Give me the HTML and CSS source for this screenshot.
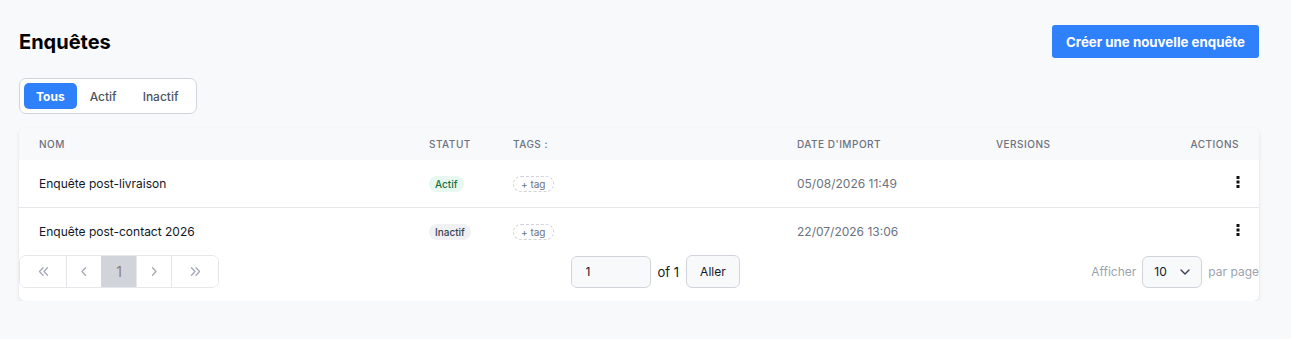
FILE: index.html
```html
<!DOCTYPE html>
<html lang="fr">
<head>
  <meta charset="UTF-8">
  <meta name="viewport" content="width=device-width, initial-scale=1.0">
  <title>Enquêtes</title>
  <link rel="stylesheet" href="styles.css">
</head>
<body>

<div class="page">
  <!-- en-tête -->
  <div class="page-head">
    <h1>Enquêtes</h1>
    <button type="button" class="btn-primary">Créer une nouvelle enquête</button>
  </div>

  <!-- filtres -->
  <div class="tabs">
    <button type="button" class="tab active">Tous</button>
    <button type="button" class="tab">Actif</button>
    <button type="button" class="tab">Inactif</button>
  </div>

  <!-- tableau -->
  <div class="card">
    <table class="survey-table">
      <colgroup>
        <col style="width:390px">
        <col style="width:84px">
        <col style="width:284px">
        <col style="width:199px">
        <col>
        <col style="width:120px">
      </colgroup>
      <thead>
        <tr>
          <th>Nom</th>
          <th>Statut</th>
          <th>Tags :</th>
          <th>Date d'import</th>
          <th>Versions</th>
          <th class="right">Actions</th>
        </tr>
      </thead>
      <tbody>
        <tr>
          <td class="name">Enquête post-livraison</td>
          <td><span class="badge on">Actif</span></td>
          <td><span class="tag-add">+ tag</span></td>
          <td class="date">05/08/2026 11:49</td>
          <td></td>
          <td class="right"><button type="button" class="kebab"><svg width="4" height="12" viewBox="0 0 4 12"><rect x="0.5" y="0" width="3" height="3"/><rect x="0.5" y="4.5" width="3" height="3"/><rect x="0.5" y="9" width="3" height="3"/></svg></button></td>
        </tr>
        <tr>
          <td class="name">Enquête post-contact 2026</td>
          <td><span class="badge off">Inactif</span></td>
          <td><span class="tag-add">+ tag</span></td>
          <td class="date">22/07/2026 13:06</td>
          <td></td>
          <td class="right"><button type="button" class="kebab"><svg width="4" height="12" viewBox="0 0 4 12"><rect x="0.5" y="0" width="3" height="3"/><rect x="0.5" y="4.5" width="3" height="3"/><rect x="0.5" y="9" width="3" height="3"/></svg></button></td>
        </tr>
      </tbody>
    </table>

    <!-- pagination -->
    <div class="pager">
      <div class="pages">
        <button type="button" class="pg first"><svg width="11" height="9" viewBox="0 0 11 9"><path d="M5 0.8L1.5 4.5 5 8.2M9.5 0.8L6 4.5 9.5 8.2"/></svg></button>
        <button type="button" class="pg"><svg width="6" height="9" viewBox="0 0 6 9"><path d="M4.5 0.8L1 4.5 4.5 8.2"/></svg></button>
        <button type="button" class="pg current">1</button>
        <button type="button" class="pg"><svg width="6" height="9" viewBox="0 0 6 9"><path d="M1.5 0.8L5 4.5 1.5 8.2"/></svg></button>
        <button type="button" class="pg last"><svg width="11" height="9" viewBox="0 0 11 9"><path d="M1.5 0.8L5 4.5 1.5 8.2M6 0.8L9.5 4.5 6 8.2"/></svg></button>
      </div>
      <div class="goto">
        <input type="text" class="goto-input" value="1">
        <span>of 1</span>
        <button type="button" class="goto-btn">Aller</button>
      </div>
      <div class="per-page">
        <span>Afficher</span>
        <div class="select">10 <svg width="10" height="6" viewBox="0 0 10 6"><path d="M1 1l4 4 4-4" fill="none" stroke="#374151" stroke-width="1.4" stroke-linecap="round" stroke-linejoin="round"/></svg></div>
        <span>par page</span>
      </div>
    </div>
  </div>
</div>

</body>
</html>
```

FILE: styles.css
```css
/* base */
body {
  margin: 0;
  background-color: #f8f9fb;
  font-family: Inter, 'Noto Sans', sans-serif;
  color: #111827;
}

button {
  font-family: inherit;
  cursor: pointer;
}

.page {
  padding: 25px 32px 0 19px;
}

/* en-tête */
.page-head {
  display: flex;
  justify-content: space-between;
  align-items: center;
  height: 33px;
}

h1 {
  margin: 0;
  font-size: 20px;
  font-weight: 700;
  color: #000;
}

.btn-primary {
  height: 33px;
  padding: 0 14px;
  border: none;
  border-radius: 3px;
  background-color: #2f80fb;
  color: #fff;
  font-size: 13.3px;
  font-weight: 700;
}

/* onglets */
.tabs {
  display: inline-flex;
  margin-top: 20px;
  padding: 4px;
  background-color: #fff;
  border: 1px solid #d1d5db;
  border-radius: 7px;
}

.tab {
  height: 26px;
  padding: 0 13px;
  border: none;
  border-radius: 5px;
  background: none;
  color: #4b5563;
  font-size: 12px;
  font-weight: 500;
}

.tab.active {
  background-color: #2f80fb;
  color: #fff;
  font-weight: 700;
  padding: 0 12px;
}

/* carte tableau */
.card {
  margin-top: 14px;
  background-color: #fff;
  border-radius: 6px;
  box-shadow: 0 2px 4px rgba(0, 0, 0, 0.09), 0 0 1px rgba(0, 0, 0, 0.06);
  padding-bottom: 13px;
  overflow: hidden;
}

.survey-table {
  width: 100%;
  border-collapse: collapse;
  table-layout: fixed;
}

.survey-table th {
  height: 32px;
  padding: 0 20px;
  background-color: #f8f9fb;
  color: #6b7280;
  font-size: 10px;
  font-weight: 500;
  letter-spacing: 0.05em;
  text-transform: uppercase;
  text-align: left;
}

.survey-table td {
  height: 47px;
  padding: 0 20px;
  font-size: 12px;
}

.survey-table tbody tr:first-child td {
  border-bottom: 1px solid #e5e7eb;
}

.survey-table .right {
  text-align: right;
}

.name {
  color: #111827;
}

.date {
  color: #6b7280;
  font-size: 11.8px;
}

.badge {
  display: inline-block;
  padding: 2px 6px;
  border-radius: 9px;
  font-size: 10px;
  font-weight: 500;
}

.badge.on {
  background-color: #e8f7ef;
  color: #177245;
}

.badge.off {
  background-color: #f0f1f3;
  color: #374151;
}

.tag-add {
  display: inline-block;
  padding: 1px 7px;
  border: 1px dashed #cfd3d9;
  border-radius: 9px;
  color: #6b7280;
  font-size: 10px;
}

.kebab {
  border: none;
  background: none;
  padding: 0;
  margin-right: -1px;
  line-height: 0;
}

.kebab svg {
  fill: #111;
}

/* pagination */
.pager {
  display: flex;
  justify-content: space-between;
  align-items: center;
}

.pages {
  display: flex;
  border: 1px solid #e5e7eb;
  border-radius: 7px;
  overflow: hidden;
}

.pg {
  display: flex;
  align-items: center;
  justify-content: center;
  width: 35px;
  height: 31px;
  padding: 0;
  border: none;
  border-left: 1px solid #e5e7eb;
  background-color: #fff;
  color: #9ca3af;
  font-size: 14px;
}

.pg svg {
  fill: none;
  stroke: #a3a8b3;
  stroke-width: 1.3;
  stroke-linecap: round;
  stroke-linejoin: round;
}

.pg.first {
  width: 46px;
  border-left: none;
}

.pg.last {
  width: 47px;
}

.pg.current {
  background-color: #d1d5db;
  color: #8a7d74;
  border-left-color: #d1d5db;
  font-size: 14px;
}

.goto {
  display: flex;
  align-items: center;
  gap: 7px;
  font-size: 13px;
  color: #111827;
}

.goto-input {
  width: 80px;
  height: 32px;
  box-sizing: border-box;
  padding: 0 14px;
  border: 1px solid #d1d5db;
  border-radius: 6px;
  background-color: #f8f9fb;
  font-family: inherit;
  font-size: 12px;
  color: #111827;
}

.goto-btn {
  height: 33px;
  padding: 0 13px;
  border: 1px solid #d1d5db;
  border-radius: 6px;
  background-color: #f8f9fb;
  color: #111827;
  font-size: 12px;
}

.per-page {
  display: flex;
  align-items: center;
  gap: 6px;
  font-size: 12px;
  color: #9ca3af;
}

.select {
  display: flex;
  align-items: center;
  justify-content: space-between;
  width: 60px;
  height: 32px;
  box-sizing: border-box;
  padding: 0 11px;
  border: 1px solid #d1d5db;
  border-radius: 6px;
  background-color: #f8f9fb;
  color: #111827;
  font-size: 12px;
}
```
